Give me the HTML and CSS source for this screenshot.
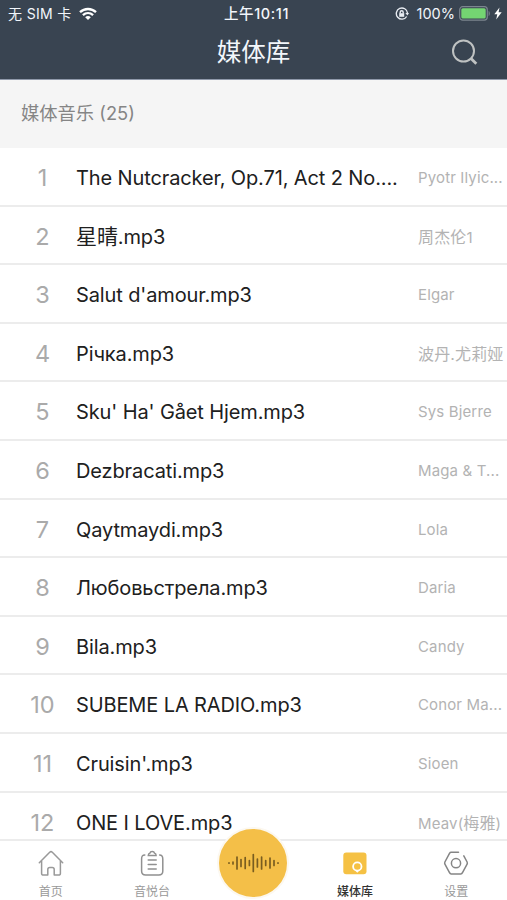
FILE: index.html
```html
<!DOCTYPE html>
<html lang="zh-CN">
<head>
<meta charset="utf-8">
<meta name="viewport" content="width=device-width, initial-scale=1">
<title>媒体库</title>
<link rel="stylesheet" href="styles.css">
</head>
<body>
<div class="app">
  <header class="header">
    <div class="status">
      <div class="status-left">
        <span>无 SIM 卡</span>
        <svg class="wifi" width="18" height="14" viewBox="0 0 18 14" fill="none" stroke="#fff" stroke-width="2.3"><path d="M1 5.2C5.5.9 12.500.9 17 5.200M3.900 8.200c3-2.800 7.200-2.800 10.200 0"/><path d="M9 13 6.200 10.200c1.600-1.500 4-1.500 5.600 0z" fill="#fff" stroke="none"/></svg>
      </div>
      <span class="time">上午10:11</span>
      <div class="status-right">
        <svg class="lock" width="14" height="14" viewBox="0 0 14 14" fill="none" stroke="#e8ecf2" stroke-width="1.400"><path d="M11.700 9.500A5.600 5.600 0 1 1 12.500 6"/><path d="M10.400 6H14l-1.600 2.500z" fill="#e8ecf2" stroke="none"/><path d="M4.200 6.200h5v3.600h-5z" fill="#e8ecf2" stroke="none"/><path d="M5.200 6.500V5.300a1.500 1.500 0 0 1 3 0v1.200"/></svg>
        <span class="percent">100%</span>
        <svg class="battery" width="32" height="15" viewBox="0 0 32 15"><rect x=".7" y=".7" width="27.600" height="13.400" rx="3" fill="none" stroke="#7c858f" stroke-width="1.200"/><rect x="2.300" y="2.300" width="24.400" height="10.200" rx="1.500" fill="#74d572"/><path d="M29.600 5c1.600.5 1.600 4.500 0 5z" fill="#7c858f"/></svg>
        <svg class="bolt" width="8" height="13" viewBox="0 0 8 13"><path d="M5.500.5.300 7.200h3L2.200 12.500 7.700 5.300H4.600z" fill="#fff"/></svg>
      </div>
    </div>
    <div class="nav">
      <h1>媒体库</h1>
      <svg class="search" width="27" height="27" viewBox="0 0 27 27" fill="none" stroke="#bfc2c2" stroke-width="2"><circle cx="11.500" cy="12" r="10.500"/><path d="m19 19.500 5.300 5.300" stroke-width="2.800"/></svg>
    </div>
  </header>
  <h2 class="section">媒体音乐 (25)</h2>
  <ol class="list">
    <li><span class="num">1</span><span class="song">The Nutcracker, Op.71, Act 2 No....</span><span class="artist">Pyotr Ilyic...</span></li>
    <li><span class="num">2</span><span class="song"><span class="han">星晴</span>.mp3</span><span class="artist"><span class="han">周杰伦</span>1</span></li>
    <li><span class="num">3</span><span class="song">Salut d'amour.mp3</span><span class="artist">Elgar</span></li>
    <li><span class="num">4</span><span class="song">Річка.mp3</span><span class="artist"><span class="han">波丹.尤莉娅</span></span></li>
    <li><span class="num">5</span><span class="song">Sku' Ha' Gået Hjem.mp3</span><span class="artist">Sys Bjerre</span></li>
    <li><span class="num">6</span><span class="song">Dezbracati.mp3</span><span class="artist">Maga &amp; T...</span></li>
    <li><span class="num">7</span><span class="song">Qaytmaydi.mp3</span><span class="artist">Lola</span></li>
    <li><span class="num">8</span><span class="song">Любовьстрела.mp3</span><span class="artist">Daria</span></li>
    <li><span class="num">9</span><span class="song">Bila.mp3</span><span class="artist">Candy</span></li>
    <li><span class="num">10</span><span class="song">SUBEME LA RADIO.mp3</span><span class="artist">Conor Ma...</span></li>
    <li><span class="num">11</span><span class="song">Cruisin'.mp3</span><span class="artist">Sioen</span></li>
    <li><span class="num">12</span><span class="song">ONE I LOVE.mp3</span><span class="artist">Meav(<span class="han">梅雅</span>)</span></li>
  </ol>
  <nav class="tabs">
    <a class="tab"><svg width="26" height="27" viewBox="0 0 26 27" fill="none" stroke="#999" stroke-width="1.500" stroke-linejoin="round" stroke-linecap="round"><path d="M1.300 12.700 11.700 2.200q1.300-1.100 2.600 0l10.400 10.500M3.600 11v12.400q0 1.600 2 1.600h4.200v-5.600q0-2 2-2h2.400q2 0 2 2V25h4.200q2 0 2-1.600V11"/></svg><span>首页</span></a>
    <a class="tab"><svg width="26" height="27" viewBox="0 0 26 27" fill="none" stroke="#909090" stroke-width="1.500" stroke-linecap="round"><path d="M5.800 4.900q-3.200 0-3.200 4v12.200q0 4 4 4h13.200q4 0 4-4V8.900q0-4-3.200-4M9.300 5.400h7.800c0-1.500-.7-2-1.600-2.300-.5-2.200-4.100-2.200-4.600 0-.9.300-1.600.8-1.600 2.300zM9.200 10h8M9.200 14.500h8M9.200 19h8"/></svg><span>音悦台</span></a>
    <a class="tab"><span class="play"><svg width="52" height="20" viewBox="0 0 52 20" stroke="#795d20" stroke-width="1.700" stroke-linecap="round"><path d="M2 9.800v.4M6 9v2M10 4v12M14 6.500v7M18.200 4.500v11M22.400 7.500v5M26.300 1.500v17M30.400 6v8M34.600 4v12M38.700 7.500v5M43 5v10M47 7.500v5M51 9.800v.4"/></svg></span></a>
    <a class="tab active"><svg width="26" height="27" viewBox="0 0 26 27"><rect x="1.300" y="2.400" width="23.200" height="21.800" rx="3" fill="#f5c144"/><path d="m12 19.300 3.300 3.500 3.300-3.500z" fill="#fff"/><circle cx="15.300" cy="16.500" r="4.200" fill="#f5c144" stroke="#fff" stroke-width="1.800"/></svg><span>媒体库</span></a>
    <a class="tab"><svg width="26" height="27" viewBox="0 0 26 27" fill="none" stroke="#858585" stroke-width="1.500" stroke-linecap="round" stroke-linejoin="round"><path d="M15.500 2.300H8.200q-1.100 0-1.700 1L1.900 12q-.5 1.100 0 2.200l4.600 8.500q.6 1.200 1.700 1.200h9.600q1.100 0 1.700-1.200l4.600-8.500q.5-1.100 0-2.200l-3.300-6.200"/><circle cx="13" cy="13.200" r="4.600"/></svg><span>设置</span></a>
  </nav>
</div>
</body>
</html>
```

FILE: styles.css
```css
* { box-sizing: border-box; }
body { margin: 0; background: #fff; font-family: Inter, "Noto Sans CJK SC", sans-serif; }
h1, h2, ol { margin: 0; padding: 0; font-weight: 400; list-style: none; }
svg { display: block; flex: none; }
.app { display: flex; flex-direction: column; width: 507px; height: 900px; overflow: hidden; }
.header { flex: none; height: 80px; background: #394451; color: #f2f6fb; border-bottom: 1px solid #8f99aa; }
.status { display: grid; grid-template-columns: 1fr auto 1fr; align-items: center; height: 27px; padding: 0 5px 0 8px; font-size: 14px; line-height: 27px; }
.status-left, .status-right { display: flex; align-items: center; }
.status-left { gap: 7px; letter-spacing: .35px; }
.status-right { justify-content: flex-end; }
.time { padding-left: 3px; font-weight: 500; font-size: 14.5px; letter-spacing: .6px; }
.percent { margin: 0 4px 0 8px; font-size: 14.5px; }
.bolt { margin-left: 3px; }
.nav { display: grid; grid-template-columns: 1fr auto 1fr; align-items: center; height: 50px; padding: 0 28px; }
.nav h1 { grid-column: 2; font-size: 24.5px; line-height: 50px; }
.search { justify-self: end; }
.section { flex: none; height: 68px; padding-left: 21px; background: #f5f5f5; color: #858585; font-size: 18.3px; line-height: 67px; }
.list { flex: 1; min-height: 0; overflow: hidden; }
.list li { display: grid; grid-template-columns: 76px 342px 1fr; align-items: center; height: 58.600px; padding-top: 3px; border-bottom: 2px solid #ececec; line-height: 54px; white-space: nowrap; }
.num { padding-left: 9px; text-align: center; font-size: 23.5px; color: #aaa; }
.song { font-size: 20px; letter-spacing: -.12px; color: #202020; }
.song .han { font-size: 21px; }
.artist { font-size: 15px; letter-spacing: .14px; color: #b3b3b3; }
.artist .han { font-size: 16px; }
.tabs { flex: none; display: grid; grid-template-columns: repeat(5, 1fr); height: 61px; border-top: 2px solid #ececec; background: #fff; }
.tab { display: flex; flex-direction: column; align-items: center; padding-top: 9px; font-size: 12px; line-height: 16px; color: #999; }
.tab > svg + span { margin-top: 7px; }
.active { color: #333; font-weight: 500; }
.play { display: flex; flex: none; align-items: center; justify-content: center; width: 72px; height: 72px; margin-top: -23px; border: 2px solid #fcf8f0; border-radius: 50%; background: #f4bf48; }
```
